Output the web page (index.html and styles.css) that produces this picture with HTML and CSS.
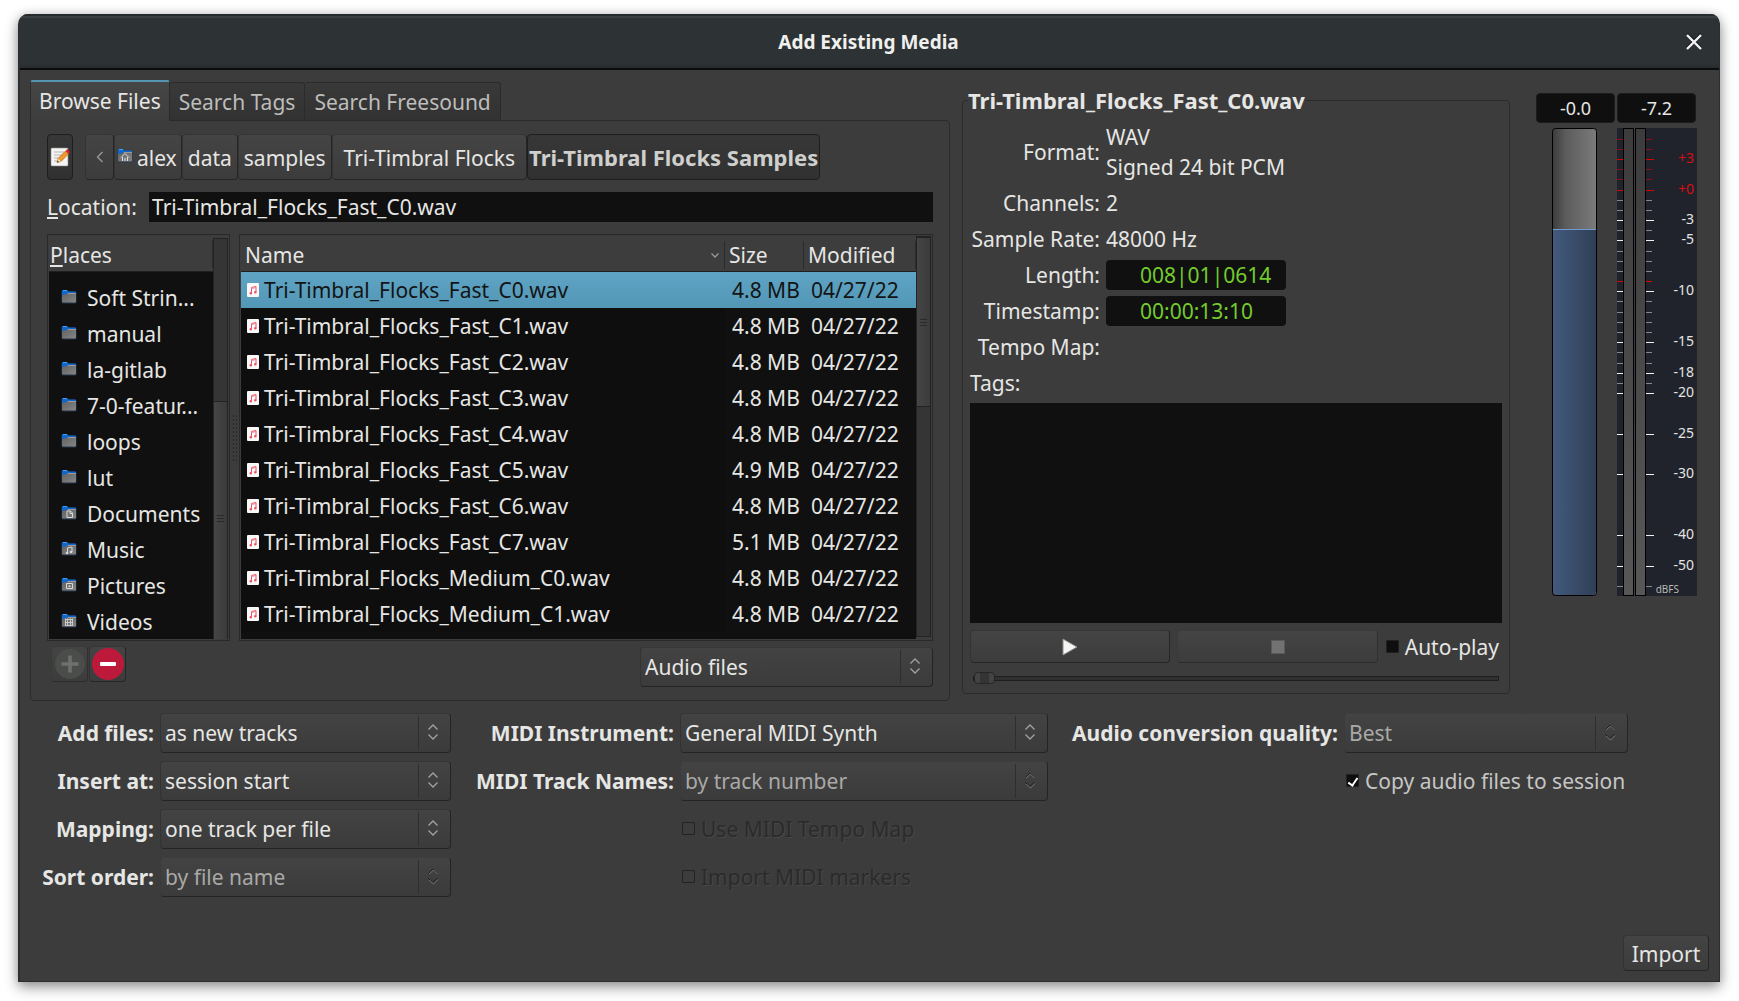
FILE: index.html
```html
<!DOCTYPE html>
<html lang="en">
<head>
<meta charset="utf-8">
<title>Add Existing Media</title>
<link rel="stylesheet" href="styles.css">
</head>
<body>
<svg class="defs" aria-hidden="true">
  <defs>
    <linearGradient id="g-folder" x1="0" y1="0" x2="1" y2="1"><stop offset="0" stop-color="#626262"/><stop offset="1" stop-color="#858585"/></linearGradient>
    <linearGradient id="g-fader" x1="0" x2="1" y1="0" y2="0"><stop offset="0" stop-color="#3c3c3c"/><stop offset=".3" stop-color="#5c5c5c"/><stop offset="1" stop-color="#7b7b7b"/></linearGradient>
    <symbol id="folder" viewBox="0 0 16 16">
      <path d="M.5 2.500q0-1.500 1.500-1.500h4l1.500 1.500h6.500q1.500 0 1.500 1.500v9q0 1.500-1.500 1.500h-12q-1.500 0-1.500-1.500z" fill="#22384d"/>
      <path d="M1 2q0-1 1-1h4l1.500 1.500H14q1 0 1 1V6H1z" fill="#1268c8"/>
      <path d="M2 1.500h4" stroke="#4a9af0"/>
      <path d="M1 6q4 0 6-2h8v8.500q0 1-1 1H2q-1 0-1-1z" fill="url(#g-folder)"/>
      <path d="M7 4.500h8" stroke="#9a9a9a"/>
    </symbol>
    <symbol id="audio" viewBox="0 0 12 14">
      <rect width="12" height="14" rx="1" fill="#f8f8f8"/>
      <path d="M4.500 10V4.500L9 3.500V9" fill="none" stroke="#e8566a"/>
      <path d="M4.500 5.500L9 4.500" stroke="#f08a98"/>
      <circle cx="3.800" cy="10.300" r="1.200" fill="#e8566a"/><circle cx="8.300" cy="9.300" r="1.200" fill="#e8566a"/>
    </symbol>
    <symbol id="updown" viewBox="0 0 12 18">
      <path d="M1.500 6.500L6 2l4.500 4.500M1.500 11.500L6 16l4.500-4.500" fill="none" stroke="currentColor" stroke-width="1.300"/>
    </symbol>
    <symbol id="updown-off" viewBox="0 0 12 18">
      <path d="M1.500 6.500L6 2l4.500 4.500" fill="none" stroke="#1c1c1c"/><path d="M2 7L6.500 3l4 4" fill="none" stroke="#858585" stroke-width=".8"/>
      <path d="M1.500 11.500L6 15.500l4.500-4.500" fill="none" stroke="#1c1c1c"/><path d="M2 13l4.500 4 4.500-4.500" fill="none" stroke="#858585" stroke-width=".8"/>
    </symbol>
  </defs>
</svg>
<main class="window">
  <header class="titlebar">
    <h1>Add Existing Media</h1>
    <button class="close" aria-label="Close"><svg width="20" height="20" viewBox="0 0 20 20"><path d="M3 3l14 14M17 3L3 17" stroke="#151a1c" stroke-width="3" transform="translate(0 -1)"/><path d="M3 3l14 14M17 3L3 17" stroke="#f4f4f4" stroke-width="2.400"/></svg></button>
  </header>
  <div class="content">
    <div class="upper">
      <section class="notebook">
        <div class="tabs" role="tablist">
          <button class="tab active" role="tab">Browse Files</button><button class="tab" role="tab">Search Tags</button><button class="tab" role="tab">Search Freesound</button>
        </div>
        <div class="page">
          <nav class="path">
            <button class="raised pressed edit" aria-label="Type a file name"><svg width="20" height="20" viewBox="0 0 20 20">
              <rect x="1" y="1" width="17" height="18" rx="1" fill="#f4f4f2" stroke="#8a8a88" stroke-width=".6"/>
              <path d="M4 5h10M4 8h8M4 11h7M4 14h4" stroke="#b5b5b3"/>
              <path d="M7 15.500l1-4L15.500 4l3 3L11 14.500z" fill="#f09a2c" stroke="#a85c10" stroke-width=".6"/>
              <path d="M8 11.500l3 3-4 1z" fill="#f1dcb0"/><path d="M7 15.500l.6-2 1.400 1.500z" fill="#333"/>
              <path d="M15.500 4L17.500 2l2.500 3-1.500 2z" fill="#d4212c"/></svg></button>
            <div class="crumbs">
              <button class="raised back" aria-label="Back"><svg width="8" height="14" viewBox="0 0 8 14"><path d="M6.500 2L1.500 7l5 5" fill="none" stroke="#9a9a9a" stroke-width="1.300"/></svg></button>
              <button class="raised home"><svg width="16" height="16"><use href="#folder"/><path d="M4 9.500l4-4 4 4M5.500 9v4M10.500 9v4M8 13v-3" fill="none" stroke="#ddd"/></svg>alex</button>
              <button class="raised">data</button>
              <button class="raised">samples</button>
              <button class="raised wide">Tri-Timbral Flocks</button>
              <button class="raised pressed current">Tri-Timbral Flocks Samples</button>
            </div>
          </nav>
          <div class="location">
            <label for="loc"><u>L</u>ocation:</label>
            <input id="loc" type="text" value="Tri-Timbral_Flocks_Fast_C0.wav">
          </div>
          <div class="browser">
            <div class="frame places">
              <div class="pane">
                <h2><span><u>P</u>laces</span></h2>
                <ul>
                  <li><svg width="16" height="16"><use href="#folder"/></svg>Soft Strin...</li>
                  <li><svg width="16" height="16"><use href="#folder"/></svg>manual</li>
                  <li><svg width="16" height="16"><use href="#folder"/></svg>la-gitlab</li>
                  <li><svg width="16" height="16"><use href="#folder"/></svg>7-0-featur...</li>
                  <li><svg width="16" height="16"><use href="#folder"/></svg>loops</li>
                  <li><svg width="16" height="16"><use href="#folder"/></svg>lut</li>
                  <li><svg width="16" height="16"><use href="#folder"/><path d="M6 6h3.500L11.500 8v4.500H6zM9 6v2.500h2.500" fill="none" stroke="#d8d8d8"/></svg>Documents</li>
                  <li><svg width="16" height="16"><use href="#folder"/><path d="M6.500 12V7L11 6v5" fill="none" stroke="#d8d8d8"/><circle cx="6" cy="12" r="1.300" fill="#d8d8d8"/><circle cx="10" cy="11" r="1.300" fill="#d8d8d8"/></svg>Music</li>
                  <li><svg width="16" height="16"><use href="#folder"/><path d="M5.500 6.500h6v5h-6z" fill="none" stroke="#d8d8d8"/><path d="M7.500 8.500h2v1.500h-2z" fill="#d8d8d8"/></svg>Pictures</li>
                  <li><svg width="16" height="16"><use href="#folder"/><path d="M4.500 5.500v7.500M11.500 5.500v7.500M6.500 5.500v7.500M9.500 5.500v7.500M4 6.500h8M4 9.500h8M4 12.500h8" fill="none" stroke="#d8d8d8" stroke-width=".8"/></svg>Videos</li>
                </ul>
              </div>
              <div class="scroll low"><div class="thumb"></div></div>
            </div>
            <div class="grip"></div>
            <div class="frame files">
              <table>
                <thead><tr><th class="name"><span>Name<svg width="8" height="5" viewBox="0 0 8 5"><path d="M.5.5L4 4 7.500.5" fill="none" stroke="#9a9a9a" stroke-width="1.300"/></svg></span></th><th class="size"><span>Size</span></th><th class="date"><span>Modified</span></th></tr></thead>
                <tbody>
                  <tr class="selected"><td><svg width="12" height="14"><use href="#audio"/></svg>Tri-Timbral_Flocks_Fast_C0.wav</td><td>4.8 MB</td><td>04/27/22</td></tr>
                  <tr><td><svg width="12" height="14"><use href="#audio"/></svg>Tri-Timbral_Flocks_Fast_C1.wav</td><td>4.8 MB</td><td>04/27/22</td></tr>
                  <tr><td><svg width="12" height="14"><use href="#audio"/></svg>Tri-Timbral_Flocks_Fast_C2.wav</td><td>4.8 MB</td><td>04/27/22</td></tr>
                  <tr><td><svg width="12" height="14"><use href="#audio"/></svg>Tri-Timbral_Flocks_Fast_C3.wav</td><td>4.8 MB</td><td>04/27/22</td></tr>
                  <tr><td><svg width="12" height="14"><use href="#audio"/></svg>Tri-Timbral_Flocks_Fast_C4.wav</td><td>4.8 MB</td><td>04/27/22</td></tr>
                  <tr><td><svg width="12" height="14"><use href="#audio"/></svg>Tri-Timbral_Flocks_Fast_C5.wav</td><td>4.9 MB</td><td>04/27/22</td></tr>
                  <tr><td><svg width="12" height="14"><use href="#audio"/></svg>Tri-Timbral_Flocks_Fast_C6.wav</td><td>4.8 MB</td><td>04/27/22</td></tr>
                  <tr><td><svg width="12" height="14"><use href="#audio"/></svg>Tri-Timbral_Flocks_Fast_C7.wav</td><td>5.1 MB</td><td>04/27/22</td></tr>
                  <tr><td><svg width="12" height="14"><use href="#audio"/></svg>Tri-Timbral_Flocks_Medium_C0.wav</td><td>4.8 MB</td><td>04/27/22</td></tr>
                  <tr><td><svg width="12" height="14"><use href="#audio"/></svg>Tri-Timbral_Flocks_Medium_C1.wav</td><td>4.8 MB</td><td>04/27/22</td></tr>
                </tbody>
              </table>
              <div class="scroll high"><div class="thumb"></div></div>
            </div>
          </div>
          <div class="under">
            <div class="bookmarks">
              <button class="raised off" disabled aria-label="Add bookmark"><svg width="32" height="32" viewBox="0 0 32 32"><circle cx="16" cy="16" r="15" fill="#4b4d4a"/><path d="M16 7.500v17M7.500 16h17" stroke="#6e706d" stroke-width="3.500"/></svg></button>
              <button class="raised" aria-label="Remove bookmark"><svg width="32" height="32" viewBox="0 0 32 32"><circle cx="16" cy="16" r="16" fill="#bd1a3b"/><rect x="8" y="14" width="16" height="4" rx="1" fill="#fff"/></svg></button>
            </div>
            <div class="combo filter"><select aria-label="File type"><option>Audio files</option></select><svg width="12" height="18"><use href="#updown"/></svg></div>
          </div>
        </div>
      </section>
      <fieldset class="preview">
        <legend>Tri-Timbral_Flocks_Fast_C0.wav</legend>
        <dl>
          <dt>Format:</dt><dd>WAV<br>Signed 24 bit PCM</dd>
          <dt>Channels:</dt><dd>2</dd>
          <dt>Sample Rate:</dt><dd>48000 Hz</dd>
          <dt>Length:</dt><dd class="clock">008|01|0614</dd>
          <dt>Timestamp:</dt><dd class="clock">00:00:13:10</dd>
          <dt>Tempo Map:</dt><dd></dd>
        </dl>
        <label class="tags-label" for="tags">Tags:</label>
        <textarea id="tags"></textarea>
        <div class="transport">
          <button class="raised" aria-label="Play"><svg width="16" height="18" viewBox="0 0 16 18"><path d="M1 1l14 8L1 17z" fill="#f6f6f4" stroke="#8c8c8a"/></svg></button>
          <button class="raised off" disabled aria-label="Stop"><svg width="14" height="14"><rect x=".5" y=".5" width="13" height="13" fill="#727272" stroke="#5a5a5a"/></svg></button>
          <label class="check"><input type="checkbox"><span>Auto-play</span></label>
        </div>
        <input class="seek" type="range" min="0" max="100" value="0" aria-label="Position">
      </fieldset>
      <section class="levels">
        <div class="readout">-0.0</div>
        <div class="readout">-7.2</div>
        <svg class="fader" width="45" height="468" viewBox="0 0 45 468">
          <rect x=".5" y=".5" width="44" height="467" rx="4" fill="url(#g-fader)"/>
          <path d="M1 101h43v362q0 4-4 4H5q-4 0-4-4z" fill="url(#g-fill)"/>
          <linearGradient id="g-fill" x1="0" x2="1" y1="0" y2="0"><stop offset="0" stop-color="#435a7d"/><stop offset="1" stop-color="#303f57"/></linearGradient>
          <path d="M1 101.500h43" stroke="#6f9bd0"/>
          <rect x=".5" y=".5" width="44" height="467" rx="3" fill="none" stroke="#000"/>
        </svg>
        <svg class="meter" width="80" height="468" viewBox="0 0 80 468">
          <linearGradient id="g-bar" x1="0" x2="0" y1="0" y2="1"><stop offset="0" stop-color="#3c3c3c"/><stop offset="1" stop-color="#575757"/></linearGradient>
          <rect width="80" height="468" fill="#20232b"/>
          <path d="M0 11.500h35M0 21.500h35M0 41.500h35M0 51.500h35" stroke="#8c1218"/>
          <path d="M0 31.500h37M0 62.500h37M0 153.500h35" stroke="#e00000"/>
          <path d="M0 72.500h35M0 82.500h35M0 102.500h35M0 123.500h35M0 133.500h35M0 143.500h35M0 173.500h35M0 184.500h35M0 194.500h35M0 204.500h35M0 224.500h35M0 235.500h35M0 255.500h35M0 458.500h35" stroke="#85878c"/>
          <path d="M0 92.500h37M0 112.500h37M0 163.500h37M0 214.500h37M0 245.500h37M0 265.500h37M0 306.500h37M0 346.500h37M0 407.500h37M0 438.500h37" stroke="#f0f0f0"/>
          <rect x="6.500" y=".5" width="10" height="467" fill="url(#g-bar)" stroke="#000"/>
          <rect x="18.500" y=".5" width="10" height="467" fill="url(#g-bar)" stroke="#000"/>
          <path d="M17.500 0v468" stroke="#3a3d44"/>
          <g class="scale">
            <text class="hot" x="77" y="35">+3</text><text class="hot" x="77" y="66">+0</text>
            <text x="77" y="96">-3</text><text x="77" y="116">-5</text><text x="77" y="167">-10</text><text x="77" y="218">-15</text><text x="77" y="249">-18</text><text x="77" y="269">-20</text><text x="77" y="310">-25</text><text x="77" y="350">-30</text><text x="77" y="411">-40</text><text x="77" y="442">-50</text>
            <text class="unit" x="62" y="465">dBFS</text>
          </g>
        </svg>
      </section>
    </div>
    <form class="options">
      <label class="c1" for="o-add">Add files:</label>
      <div class="combo c2"><select id="o-add"><option>as new tracks</option></select><svg width="12" height="18"><use href="#updown"/></svg></div>
      <label class="c3" for="o-inst">MIDI Instrument:</label>
      <div class="combo c4"><select id="o-inst"><option>General MIDI Synth</option></select><svg width="12" height="18"><use href="#updown"/></svg></div>
      <label class="c5" for="o-quality">Audio conversion quality:</label>
      <div class="combo c6"><select id="o-quality" disabled><option>Best</option></select><svg width="12" height="18"><use href="#updown-off"/></svg></div>

      <label class="c1" for="o-insert">Insert at:</label>
      <div class="combo c2"><select id="o-insert"><option>session start</option></select><svg width="12" height="18"><use href="#updown"/></svg></div>
      <label class="c3" for="o-names">MIDI Track Names:</label>
      <div class="combo c4"><select id="o-names" disabled><option>by track number</option></select><svg width="12" height="18"><use href="#updown-off"/></svg></div>
      <label class="check copy c6"><input type="checkbox" checked><span>Copy audio files to session</span></label>

      <label class="c1" for="o-map">Mapping:</label>
      <div class="combo c2"><select id="o-map"><option>one track per file</option></select><svg width="12" height="18"><use href="#updown"/></svg></div>
      <label class="check c4"><input type="checkbox" disabled><span>Use MIDI Tempo Map</span></label>

      <label class="c1" for="o-sort">Sort order:</label>
      <div class="combo c2"><select id="o-sort" disabled><option>by file name</option></select><svg width="12" height="18"><use href="#updown-off"/></svg></div>
      <label class="check c4"><input type="checkbox" disabled><span>Import MIDI markers</span></label>
    </form>
    <footer><button class="raised import">Import</button></footer>
  </div>
</main>
</body>
</html>
```
FILE: styles.css
```css
* { box-sizing: border-box; }

body {
  margin: 0;
  padding: 14px 19px 19px 18px;
  min-height: 100vh;
  display: flex;
  background: #fff;
  color: #e6e6e4;
  font: 21px/30px "Noto Sans", "Open Sans", sans-serif;
}

.defs { position: absolute; width: 0; height: 0; }
svg { display: block; flex: none; }

button, input, select, textarea {
  font: inherit;
  color: inherit;
  margin: 0;
  padding: 0;
  border: 0;
  background: none;
}

.window {
  flex: 1;
  display: flex;
  flex-direction: column;
  background: #3c3c3c;
  border: solid #2b2f31;
  border-width: 0 1px 1px 2px;
  border-radius: 10px 10px 0 0;
  box-shadow: 0 5px 14px rgba(0, 0, 0, .42), 0 0 10px rgba(0, 0, 0, .12);
}

.titlebar {
  display: grid;
  grid-template-columns: 38px 1fr 40px;
  align-items: center;
  height: 56px;
  padding: 2px 5px 0;
  background: linear-gradient(#262c2e 0 2px, #3a4143 2px 4px, #2d3235 4px 50px, #272b2e);
  border-bottom: 2px solid #0b0c0c;
  border-radius: 8px 8px 0 0;
}
.titlebar h1 {
  grid-column: 2;
  margin: 0;
  font-size: 19px;
  line-height: 28px;
  font-weight: 700;
  text-align: center;
  color: #f0f0ee;
}
.close { display: grid; place-items: center; height: 40px; }

.content {
  flex: 1;
  display: flex;
  flex-direction: column;
  padding: 10px;
}

.upper {
  display: grid;
  grid-template-columns: minmax(0, 920fr) minmax(0, 560fr) 187px;
  padding-right: 12px;
}

/* Notebook */
.notebook { min-width: 0; }
.tabs { display: flex; align-items: flex-end; height: 40px; }
.tab {
  height: 38px;
  padding: 1px 9px 0;
  border: 1px solid #2b2b2b;
  border-bottom: 0;
  border-left: 0;
  border-radius: 3px 3px 0 0;
  background: linear-gradient(#393939, #323232);
  color: #bdbdbb;
  white-space: nowrap;
}
.tab.active {
  height: 41px;
  margin-bottom: -1px;
  padding: 0 8px 2px;
  border-top: 2px solid #5596b5;
  border-left: 1px solid #2b2b2b;
  background: linear-gradient(#464646, #3d3d3d);
  color: #e6e6e4;
}
.page {
  display: flex;
  flex-direction: column;
  padding: 13px 16px;
  border: 1px solid #2b2b2b;
  border-radius: 0 4px 4px 4px;
}

.raised {
  display: flex;
  align-items: center;
  justify-content: center;
  border: 1px solid #262626;
  border-top-color: #363636;
  border-left-color: #333;
  border-radius: 4px;
  background: linear-gradient(#444, #3c3c3c);
  white-space: nowrap;
}
.raised.pressed {
  border-color: #1e1e1e;
  background: linear-gradient(#373737, #313131);
}
.raised.off { border-color: #3a3a3a #303030 #2c2c2c #3a3a3a; }

.path { display: flex; gap: 12px; height: 46px; }
.path .raised { padding: 1px 5px 0; }
.path .edit { width: 26px; padding: 0; }
.crumbs { display: flex; }
.crumbs .raised.back { width: 29px; padding: 0; }
.crumbs .raised.home { gap: 4px; padding: 1px 4px 0 2px; }
.crumbs .home svg { margin-top: -4px; }
.crumbs .raised.wide { padding: 1px 11px 0; }
.crumbs .raised.current { padding: 0 1px; font-size: 22px; font-weight: 700; color: #cfcfcd; }

.location { display: flex; margin-top: 12px; height: 30px; }
.location label { width: 102px; }
.location input { flex: 1; min-width: 0; padding: 0 3px; background: #101010; }

.browser { display: flex; margin-top: 12px; }
.frame {
  display: flex;
  min-width: 0;
  border: 1px solid #292929;
  padding: 1px;
  height: 407px;
}
.places { width: 183px; }
.files { flex: 1; }
.pane { flex: 1; min-width: 0; background: #101010; }
.pane h2, th {
  height: 36px;
  margin: 0;
  padding: 0;
  font-size: 21px;
  font-weight: 400;
  text-align: left;
  background: #3d3d3d;
  border-bottom: 1px solid #202020;
}
.pane h2 { padding: 4px 0 0 1px; }
.pane h2 span { display: block; height: 28px; border-right: 1px solid #2b2b2b; }
ul { margin: 0; padding: 8px 0 0; list-style: none; }
li {
  display: flex;
  align-items: center;
  gap: 10px;
  height: 36px;
  padding-left: 12px;
  line-height: 34px;
  white-space: nowrap;
}
li svg { margin-top: -3px; }

.grip {
  width: 9px;
  display: grid;
  place-items: center;
}
.grip::before {
  content: "";
  width: 5px;
  height: 48px;
  background: radial-gradient(circle, #282828 1px, transparent 1px) 0 0 / 3px 4px;
}

.scroll { width: 15px; background: #353535; border: 1px solid #232323; }
.scroll.low { margin-top: 2px; border-bottom: 0; padding-top: 162px; }
.scroll.high { margin-bottom: 2px; }
.thumb {
  display: grid;
  place-items: center;
  border-top: 1px solid #222;
  background: linear-gradient(90deg, #454545, #3b3b3b);
}
.thumb::before {
  content: "";
  width: 7px;
  height: 7px;
  background: repeating-linear-gradient(#292929 0 1px, transparent 1px 3px);
}
.low .thumb { height: 100%; padding-bottom: 4px; }
.high .thumb { height: 170px; border-bottom: 1px solid #222; }

table {
  flex: 1;
  min-width: 0;
  align-self: flex-start;
  table-layout: fixed;
  border-collapse: separate;
  border-spacing: 0;
  background: #101010;
  border-bottom: 7px solid #101010;
}
.size { width: 79px; }
.date { width: 112px; }
th span {
  display: flex;
  align-items: center;
  justify-content: space-between;
  height: 28px;
  margin-top: 3px;
  padding: 0 5px 0 4px;
  border-right: 1px solid #2b2b2b;
}
td { height: 36px; padding: 0 4px 0 7px; white-space: nowrap; line-height: 36px; }
td:first-child { padding-left: 6px; background: #0e0e0e; }
td:first-child svg { display: inline-block; margin: 0 5px 1px 0; }
.selected { background: linear-gradient(#5fa4c4, #5297b6); color: #141414; }
.selected td:first-child { background: none; }

.under { display: flex; justify-content: space-between; align-items: flex-start; margin-top: 5px; }
.bookmarks { display: flex; gap: 1px; padding-left: 4px; }
.bookmarks .raised { width: 37px; height: 36px; }

.combo { position: relative; height: 40px; }
.combo select {
  appearance: none;
  width: 100%;
  height: 40px;
  padding: 0 40px 0 4px;
  border: 1px solid #242424;
  border-top-color: #363636;
  border-left-color: #333;
  border-radius: 4px;
  background: linear-gradient(#434343, #3b3b3b);
}
.combo select:disabled {
  opacity: 1;
  color: #a9a9a7;
  border-top-color: #3e3e3e;
  border-left-color: #3b3b3b;
}
.combo::after {
  content: "";
  position: absolute;
  top: 3px;
  right: 32px;
  width: 1px;
  height: 34px;
  background: #2e2e2e;
  pointer-events: none;
}
.combo svg { position: absolute; top: 10px; right: 12px; color: #a2a2a0; pointer-events: none; }
.filter { width: 293px; margin-top: 1px; }

/* Preview */
.preview {
  min-width: 0;
  margin: 6px 0 0 12px;
  padding: 8px 7px 9px;
  border: 1px solid #2b2b2b;
  border-radius: 4px;
  align-self: start;
}
legend { margin-left: -2px; padding: 0; font-size: 22px; font-weight: 700; line-height: 28px; }
dl { display: grid; grid-template-columns: 130px 180px; gap: 6px; margin: 0; }
dt { text-align: right; align-self: center; white-space: nowrap; }
dd { margin: 0; min-height: 30px; white-space: nowrap; }
.clock { padding-left: 34px; border-radius: 4px; background: #101010; color: #73cc2e; }
.tags-label { display: block; margin-top: 6px; }
textarea {
  display: block;
  width: 100%;
  height: 220px;
  margin-top: 5px;
  resize: none;
  background: #101010;
}
.transport { display: flex; gap: 7px; margin-top: 7px; }
.transport .raised { flex: 1; height: 33px; }
.check { display: flex; align-items: center; gap: 6px; white-space: nowrap; }
.transport .check { padding: 0 3px 0 1px; }
.check input {
  appearance: none;
  display: grid;
  place-items: center;
  width: 13px;
  height: 13px;
  border: 1px solid #202020;
  border-radius: 1px;
  background: #0e0e0e;
}
.check input:checked::before {
  content: "";
  width: 4px;
  height: 8px;
  border: solid #fff;
  border-width: 0 2px 2px 0;
  transform: rotate(35deg);
}
.check input:disabled { background: none; border-color: #222; }
.check input:disabled + span { color: #2b2b2b; text-shadow: 1px 1px #474747; }
.copy { color: #c6c6c4; }
.seek {
  appearance: none;
  display: block;
  width: calc(100% - 6px);
  height: 12px;
  margin: 9px 3px 0;
}
.seek::-webkit-slider-runnable-track { height: 5px; background: #303030; border: 1px solid #1e1e1e; }
.seek::-webkit-slider-thumb {
  appearance: none;
  width: 21px;
  height: 12px;
  margin-top: -5px;
  border: 1px solid #262626;
  border-radius: 4px;
  background: linear-gradient(90deg, #444 5px, #343434 5px 14px, #444 14px);
}

/* Level meters */
.levels {
  display: grid;
  grid-template-columns: 79px 80px;
  grid-template-rows: 30px 468px;
  gap: 5px 2px;
  width: 161px;
  margin-top: 13px;
  justify-self: end;
}
.readout {
  width: 79px;
  border: 1px solid #1c1c1c;
  border-radius: 4px;
  background: #0f0f0f;
  font-size: 18px;
  line-height: 29px;
  text-align: center;
}
.fader { margin-left: 16px; }
.scale { font-size: 14px; fill: #e4e4e2; text-anchor: end; }
.scale .hot { fill: #d80c14; }
.scale .unit { font-size: 10px; fill: #b8b8b8; }

/* Import options */
.options {
  display: grid;
  grid-template-columns: 124px minmax(0, 291fr) 217px minmax(0, 368fr) 284px minmax(0, 284fr);
  column-gap: 6px;
  row-gap: 8px;
  align-items: center;
  margin-top: 12px;
  padding-right: 81px;
}
.options > label { text-align: right; font-weight: 700; white-space: nowrap; }
.options > .check { font-weight: 400; height: 40px; padding-bottom: 1px; }
.c1 { grid-column: 1; }
.c2 { grid-column: 2; }
.c3 { grid-column: 3; }
.c4 { grid-column: 4; }
.c5 { grid-column: 5; }
.c6 { grid-column: 6; }
.check.c4, .check.c6 { padding-left: 2px; }

footer { display: flex; justify-content: flex-end; margin-top: auto; padding-top: 24px; }
.import { width: 86px; height: 36px; padding-top: 2px; }
```
